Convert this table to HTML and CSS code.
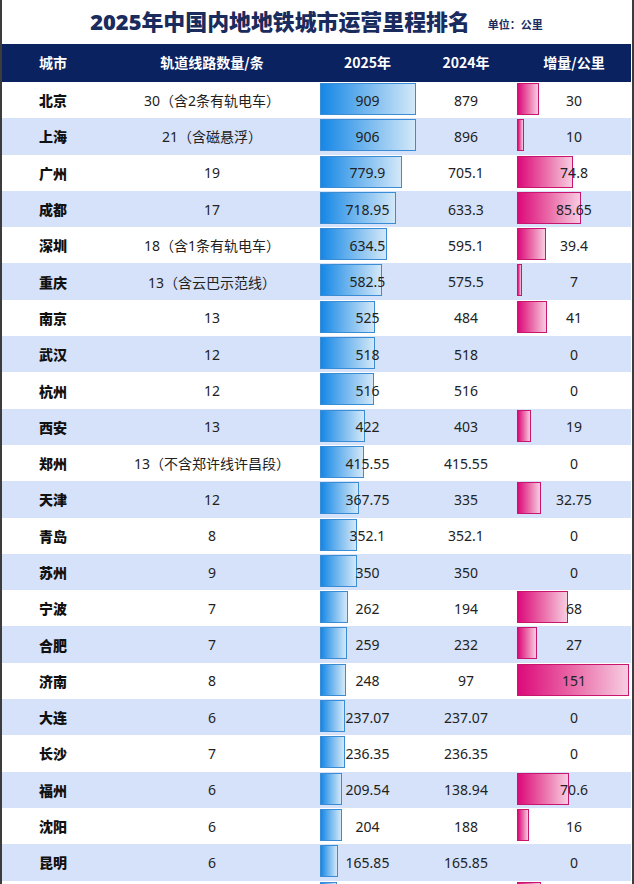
FILE: index.html
```html
<!DOCTYPE html>
<html lang="zh">
<head>
<meta charset="utf-8">
<title>2025年中国内地地铁城市运营里程排名</title>
<link rel="stylesheet" href="styles.css">
</head>
<body>
<div class="page">
  <div class="title-bar">
    <h1 class="title">2025年中国内地地铁城市运营里程排名</h1>
    <span class="unit">单位：公里</span>
  </div>
  <div class="head row">
    <div class="c1">城市</div>
    <div class="c2">轨道线路数量/条</div>
    <div class="c3">2025年</div>
    <div class="c4">2024年</div>
    <div class="c5">增量/公里</div>
  </div>
  <div id="rows"></div>
</div>
<script src="app.js"></script>
</body>
</html>
```
FILE: styles.css
```css
* { box-sizing: border-box; }
html, body { margin: 0; padding: 0; background: #fff; }
body {
  font-family: "Noto Sans", "Noto Sans CJK SC", sans-serif;
  color: #222;
  width: 634px;
  height: 884px;
  overflow: hidden;
}
.page {
  width: 634px;
  height: 884px;
  border-left: 2px solid #3c3c3c;
  border-right: 2px solid #3c3c3c;
  padding-right: 1px;
  overflow: hidden;
}
.title-bar {
  height: 44px;
  display: flex;
  align-items: center;
  justify-content: center;
  gap: 18px;
  padding-left: 0;
}
.title {
  margin: 0;
  font-family: "Noto Sans", "Noto Sans CJK SC", sans-serif;
  font-size: 21.9px;
  font-weight: 900;
  color: #1a2b5e;
  line-height: 1;
}
.unit {
  font-family: "Noto Sans CJK SC", sans-serif;
  font-size: 11px;
  font-weight: 700;
  color: #1a2b5e;
  margin-top: 4px;
}
.row {
  display: grid;
  grid-template-columns: 102px 216px 95px 102px 1fr;
  height: 36.3px;
  align-items: center;
  font-size: 14px;
}
.row > div {
  text-align: center;
  position: relative;
  height: 100%;
  display: flex;
  align-items: center;
  justify-content: center;
}
.head {
  height: 38px;
  background: #0b2261;
  color: #fff;
  font-weight: 700;
  font-family: "Noto Sans CJK SC", sans-serif;
  padding-bottom: 2px;
}
.row.alt { background: #d6e2fa; }
.c1.city { font-weight: 900; font-family: "Noto Sans CJK SC", sans-serif; color: #111; }
.val { position: relative; z-index: 1; }
.bar {
  position: absolute;
  left: 0;
  top: 1px;
  height: 32px;
}
.bar.blue {
  background: linear-gradient(to right, #1587e6 0%, #6db4ee 45%, #d3e8f8 100%);
  border: 1px solid #3a8dd4;
}
.bar.pink {
  background: linear-gradient(to right, #dc0a7a 0%, #ea6aa8 50%, #f7cde1 100%);
  border: 1px solid #c8166f;
}
```
FILE: app.js
```js
const data = [
  ["北京","30（含2条有轨电车）",909,879,30],
  ["上海","21（含磁悬浮）",906,896,10],
  ["广州","19",779.9,705.1,74.8],
  ["成都","17",718.95,633.3,85.65],
  ["深圳","18（含1条有轨电车）",634.5,595.1,39.4],
  ["重庆","13（含云巴示范线）",582.5,575.5,7],
  ["南京","13",525,484,41],
  ["武汉","12",518,518,0],
  ["杭州","12",516,516,0],
  ["西安","13",422,403,19],
  ["郑州","13（不含郑许线许昌段）",415.55,415.55,0],
  ["天津","12",367.75,335,32.75],
  ["青岛","8",352.1,352.1,0],
  ["苏州","9",350,350,0],
  ["宁波","7",262,194,68],
  ["合肥","7",259,232,27],
  ["济南","8",248,97,151],
  ["大连","6",237.07,237.07,0],
  ["长沙","7",236.35,236.35,0],
  ["福州","6",209.54,138.94,70.6],
  ["沈阳","6",204,188,16],
  ["昆明","6",165.85,165.85,0],
  [null,null,160.2,null,31.7]
];
const rows = document.getElementById("rows");
data.forEach((d, i) => {
  const r = document.createElement("div");
  r.className = "row" + (i % 2 === 1 ? " alt" : "");
  const blueW = (d[2] * 0.1055).toFixed(1);
  const pinkW = (d[4] * 0.742).toFixed(1);
  const show = d[0] !== null;
  r.innerHTML =
    '<div class="c1 city">' + (show ? d[0] : '') + '</div>' +
    '<div class="c2">' + (show ? d[1] : '') + '</div>' +
    '<div class="c3"><span class="bar blue" style="width:' + blueW + 'px"></span>' + (show ? '<span class="val">' + d[2] + '</span>' : '') + '</div>' +
    '<div class="c4">' + (show ? d[3] : '') + '</div>' +
    '<div class="c5">' + (d[4] > 0 ? '<span class="bar pink" style="width:' + pinkW + 'px"></span>' : '') + (show ? '<span class="val">' + d[4] + '</span>' : '') + '</div>';
  rows.appendChild(r);
});
```
